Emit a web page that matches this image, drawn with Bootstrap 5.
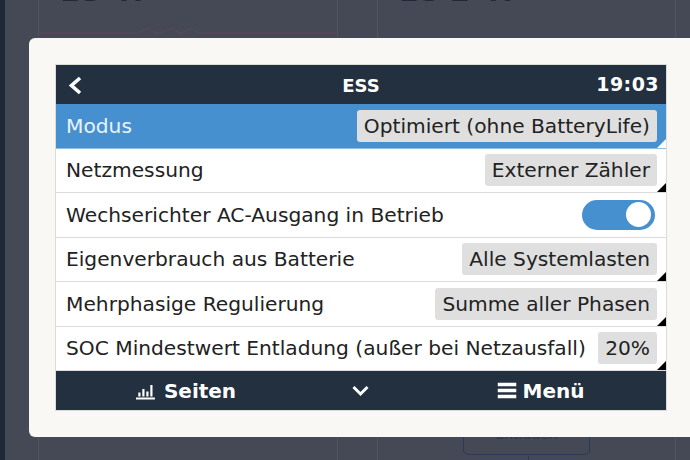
<!DOCTYPE html>
<html lang="de">
<head>
  <meta charset="UTF-8">
  <meta name="viewport" content="width=device-width, initial-scale=1.0">
  <title>ESS</title>
  <link rel="stylesheet" href="https://cdn.jsdelivr.net/npm/bootstrap@5.3.0/dist/css/bootstrap.min.css">
  <script src="https://cdn.jsdelivr.net/npm/bootstrap@5.3.0/dist/js/bootstrap.bundle.min.js"></script>
  <style>
    body {
      width: 690px;
      height: 460px;
      overflow: hidden;
      position: relative;
      background: #444955;
      font-family: "DejaVu Sans", sans-serif;
    }

    .page-back {
      height: 460px;
      border-left: 5px solid #1e2836;
      padding: 0 14px 0 33px;
      gap: 39px;
    }

    .back-tile {
      flex: 1;
      border-left: 1px solid #4f545f;
      border-right: 1px solid #4f545f;
      color: #1f2937;
      font-size: 29px;
      font-weight: 700;
      line-height: 1;
    }

    .back-title {
      margin-top: -23px;
      padding-left: 21px;
      white-space: nowrap;
    }

    .back-chart {
      display: block;
      margin-top: 20px;
    }

    .back-btn {
      position: absolute;
      left: 463px;
      top: 420px;
      width: 127px;
      height: 35px;
      border: 1px solid #2b3a55;
      border-radius: 5px;
      color: #2b3a55;
      font-size: 14px;
      line-height: 17px;
      text-align: center;
      padding-top: 5px;
    }

    .back-btn::after {
      content: "";
      position: absolute;
      left: 64px;
      top: 35px;
      width: 1px;
      height: 5px;
      background: #2b3a55;
    }

    .dialog-box {
      position: absolute;
      left: 29px;
      top: 38px;
      width: 670px;
      height: 399px;
      background: #f9f8f4;
      border-radius: 6px;
      padding: 27px 0 0 27px;
    }

    .gx-screen {
      width: 610px;
      height: 345px;
      box-shadow: 0 0 0 1px #dcdcd8;
    }

    .gx-bar {
      height: 39px;
      background: #22303f;
      color: #fff;
      font-weight: 700;
    }

    .gx-head-title {
      font-size: 18px;
    }

    .gx-clock {
      font-size: 19px;
      padding-right: 7px;
      letter-spacing: .45px;
    }

    .gx-foot {
      font-size: 20px;
    }

    .gx-menu-item {
      gap: 6px;
    }

    .gx-row {
      height: 44.5px;
      padding: 0 9px 0 10px;
      background: #fff;
      border-bottom: 1px solid #dcdcdc;
      color: #222;
      font-size: 20.2px;
      position: relative;
    }

    .gx-row:last-of-type {
      border-bottom: 0;
    }

    .gx-row.gx-active {
      background: #4790d0;
      color: #eaf3fb;
      border-bottom: 1px solid #8fbde4;
    }

    .gx-value {
      background: #dfdfdf;
      color: #222;
      border-radius: 3px;
      padding: 0 7px;
      height: 32px;
      line-height: 32px;
      white-space: nowrap;
    }

    .gx-row::after {
      content: "";
      position: absolute;
      right: 0;
      bottom: 0;
      border-left: 9px solid transparent;
      border-bottom: 9px solid #000;
    }

    .gx-row.gx-active::after {
      border-bottom-color: #fff;
    }

    .gx-row.gx-noarrow::after {
      display: none;
    }

    .gx-switch {
      width: 73px;
      height: 30px;
      margin-right: 2px;
      background: #4790d0;
      border-radius: 15px;
      position: relative;
    }

    .gx-knob {
      position: absolute;
      right: 4px;
      top: 2.5px;
      width: 25px;
      height: 25px;
      background: #fff;
      border-radius: 50%;
    }
  </style>
</head>
<body>
  <div class="page-back d-flex">
    <div class="back-tile">
      <div class="back-title">ES 47</div>
      <svg class="back-chart" width="298" height="12" viewBox="0 0 298 12"><path d="M0 7H98C102 7 104 3 108 3C112 3 114 7 120 7C126 7 128 3 132 3C136 3 138 7 142 7C146 7 148 3 152 3C156 3 156 7 162 7H298" fill="none" stroke="#5c4a55" stroke-width="1"/></svg>
    </div>
    <div class="back-tile"><div class="back-title">ES 2 47</div></div>
  </div>
  <div class="back-btn">Entladen</div>

  <div class="dialog-box">
    <div class="gx-screen d-flex flex-column">
      <div class="gx-bar d-flex align-items-center justify-content-between position-relative">
        <svg class="ms-2" width="24" height="24" viewBox="0 0 24 24"><path d="M16 5 L7.5 12.5 L16 20" fill="none" stroke="#fff" stroke-width="3.6"/></svg>
        <span class="gx-head-title position-absolute top-50 start-50 translate-middle">ESS</span>
        <span class="gx-clock">19:03</span>
      </div>

      <div class="gx-row gx-active d-flex align-items-center justify-content-between">
        <span>Modus</span><span class="gx-value">Optimiert (ohne BatteryLife)</span>
      </div>
      <div class="gx-row d-flex align-items-center justify-content-between">
        <span>Netzmessung</span><span class="gx-value">Externer Zähler</span>
      </div>
      <div class="gx-row gx-noarrow d-flex align-items-center justify-content-between">
        <span>Wechserichter AC-Ausgang in Betrieb</span><span class="gx-switch"><span class="gx-knob"></span></span>
      </div>
      <div class="gx-row d-flex align-items-center justify-content-between">
        <span>Eigenverbrauch aus Batterie</span><span class="gx-value">Alle Systemlasten</span>
      </div>
      <div class="gx-row d-flex align-items-center justify-content-between">
        <span>Mehrphasige Regulierung</span><span class="gx-value">Summe aller Phasen</span>
      </div>
      <div class="gx-row d-flex align-items-center justify-content-between">
        <span>SOC Mindestwert Entladung (außer bei Netzausfall)</span><span class="gx-value">20%</span>
      </div>

      <div class="gx-bar gx-foot d-flex align-items-center position-relative">
        <span class="d-flex align-items-center gap-2 position-absolute top-50 translate-middle" style="left:130px">
          <svg width="20" height="18" viewBox="0 0 20 18"><path d="M0 16.5H19M3.5 14.5V10.5M7.5 14.5V7M11.5 14.5V9.5M15.5 14.5V3" stroke="#fff" stroke-width="2.2" fill="none"/></svg>Seiten
        </span>
        <svg class="position-absolute top-50 start-50 translate-middle" width="20" height="14" viewBox="0 0 20 14"><path d="M2.5 3 L9.5 10 L16.5 3" fill="none" stroke="#fff" stroke-width="3"/></svg>
        <span class="gx-menu-item d-flex align-items-center position-absolute top-50 translate-middle" style="left:485px">
          <svg width="19" height="17" viewBox="0 0 19 17"><path d="M0 2.5H19M0 8.5H19M0 14.5H19" stroke="#fff" stroke-width="3.4"/></svg>Menü
        </span>
      </div>
    </div>
  </div>
</body>
</html>
